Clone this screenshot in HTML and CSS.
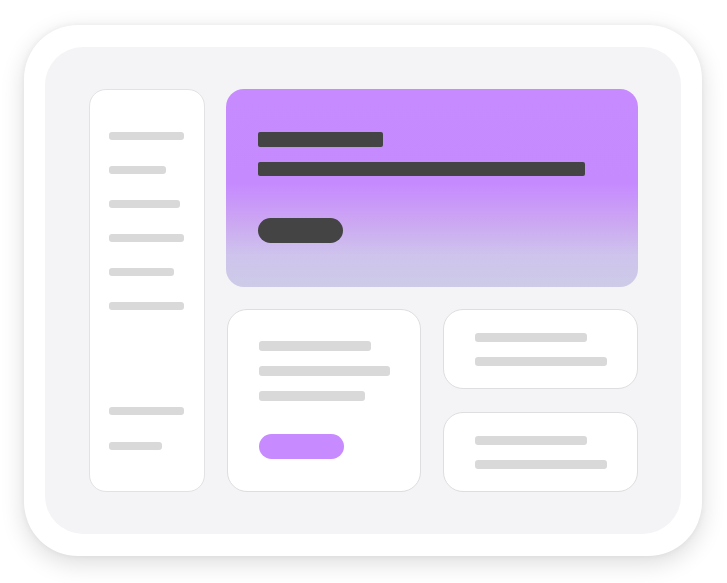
FILE: index.html
```html
<!DOCTYPE html>
<html>
<head>
<meta charset="utf-8">
<link rel="stylesheet" href="styles.css">
</head>
<body>
<div class="frame">
  <div class="panel">
    <aside class="sidebar">
      <div class="group">
        <span class="line w75"></span>
        <span class="line w57"></span>
        <span class="line w71"></span>
        <span class="line w75"></span>
        <span class="line w65"></span>
        <span class="line w75"></span>
      </div>
      <div class="group bottom">
        <span class="line w75"></span>
        <span class="line w53"></span>
      </div>
    </aside>
    <main class="main">
      <section class="hero">
        <span class="bar title"></span>
        <span class="bar sub"></span>
        <span class="hero-pill"></span>
      </section>
      <div class="row">
        <div class="card big">
          <span class="gline w112"></span>
          <span class="gline w131"></span>
          <span class="gline w106"></span>
          <span class="cta"></span>
        </div>
        <div class="stack">
          <div class="card small">
            <span class="sline w112"></span>
            <span class="sline w132"></span>
          </div>
          <div class="card small">
            <span class="sline w112"></span>
            <span class="sline w132"></span>
          </div>
        </div>
      </div>
    </main>
  </div>
</div>
</body>
</html>
```

FILE: styles.css
```css
html, body {
  margin: 0;
  padding: 0;
  background: #ffffff;
  font-family: "Liberation Sans", Arial, sans-serif;
}
body {
  width: 727px;
  height: 583px;
  overflow: hidden;
}
.frame {
  box-sizing: border-box;
  margin: 25px 0 0 24px;
  width: 678px;
  height: 531px;
  padding: 22px 21px 22px 21px;
  background: #ffffff;
  border-radius: 54px;
  box-shadow: 0 7px 24px rgba(0, 0, 0, 0.14), 0 0 6px rgba(0, 0, 0, 0.05);
}
.panel {
  box-sizing: border-box;
  width: 636px;
  height: 487px;
  background: #f4f4f6;
  border-radius: 38px;
  padding: 42px 43px 42px 44px;
  display: flex;
  gap: 21px;
}
.sidebar {
  box-sizing: border-box;
  width: 116px;
  height: 403px;
  background: #ffffff;
  border: 1px solid #e2e2e4;
  border-radius: 17px;
  padding: 42px 0 41px 19px;
  display: flex;
  flex-direction: column;
  justify-content: space-between;
}
.group {
  display: flex;
  flex-direction: column;
  gap: 26px;
}
.group.bottom {
  gap: 27px;
}
.line {
  display: block;
  height: 8px;
  border-radius: 3px;
  background: #d9d9da;
}
.w75 { width: 75px; }
.w57 { width: 57px; }
.w71 { width: 71px; }
.w65 { width: 65px; }
.w53 { width: 53px; }
.main {
  width: 412px;
  display: flex;
  flex-direction: column;
  gap: 22px;
}
.hero {
  box-sizing: border-box;
  height: 198px;
  border-radius: 18px;
  background: linear-gradient(180deg, #c78aff 0%, #c68aff 48%, #cca8f2 68%, #cec4ec 84%, #cdcbe8 100%);
  padding: 43px 0 0 32px;
  display: flex;
  flex-direction: column;
  align-items: flex-start;
}
.bar {
  display: block;
  background: #444444;
  border-radius: 2px;
}
.bar.title {
  width: 125px;
  height: 15px;
}
.bar.sub {
  width: 327px;
  height: 14px;
  margin-top: 15px;
}
.hero-pill {
  display: block;
  width: 85px;
  height: 25px;
  margin-top: 42px;
  border-radius: 13px;
  background: #444444;
}
.row {
  display: flex;
  gap: 22px;
  height: 183px;
}
.card {
  box-sizing: border-box;
  background: #ffffff;
  border: 1px solid #dedee0;
  border-radius: 20px;
}
.card.big {
  width: 194px;
  height: 183px;
  margin-left: 1px;
  padding: 31px 0 0 31px;
  display: flex;
  flex-direction: column;
  align-items: flex-start;
}
.gline {
  display: block;
  height: 10px;
  border-radius: 3px;
  background: #d9d9da;
  margin-bottom: 15px;
}
.w112 { width: 112px; }
.w131 { width: 131px; }
.w106 { width: 106px; }
.w132 { width: 132px; }
.cta {
  display: block;
  width: 85px;
  height: 25px;
  margin-top: 18px;
  border-radius: 13px;
  background: #c78aff;
}
.stack {
  width: 195px;
  display: flex;
  flex-direction: column;
  gap: 23px;
}
.card.small {
  height: 80px;
  padding: 23px 0 0 31px;
  display: flex;
  flex-direction: column;
  gap: 15px;
}
.sline {
  display: block;
  height: 9px;
  border-radius: 3px;
  background: #d9d9da;
}
```
